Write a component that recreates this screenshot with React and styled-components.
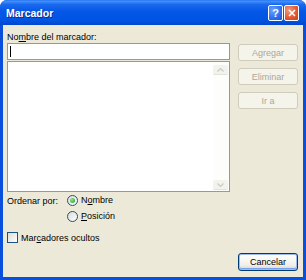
import React from 'react';
import styled, { createGlobalStyle } from 'styled-components';

const GlobalStyle = createGlobalStyle`
    html, body {
        margin: 0;
        padding: 0;
        background: #ffffff;
    }
    body {
        font-family: "Liberation Sans", Arial, sans-serif;
        font-size: 9px;
        color: #000;
    }
`

const Window = styled.div`
    width: 306px;
    height: 280px;
    display: flex;
    flex-direction: column;
    background: #0a4fdc;
    border-radius: 7px 7px 0 0;
    overflow: hidden;
`
const TitleBar = styled.div`
    height: 25px;
    flex: none;
    display: flex;
    align-items: center;
    padding: 0 7px 0 6px;
    background: linear-gradient(to bottom, #2a78f2 0%, #3d8ef8 6%, #1a68ee 18%, #0558e6 45%, #0054e3 80%, #0047cf 100%);
`
const Title = styled.span`
    flex: 1;
    color: #fff;
    font-weight: bold;
    font-size: 10.5px;
    text-shadow: 1px 1px 0 #0a2e8c;
    padding-top: 1px;
`
const TitleButton = styled.div`
    width: 13px;
    height: 14px;
    margin-left: 1px;
    border: 1px solid #fff;
    border-radius: 2px;
    display: flex;
    align-items: center;
    justify-content: center;
    background: ${({ $red }) => $red
        ? 'radial-gradient(circle at 30% 30%, #f29a7c, #e0562f 60%, #c8401c)'
        : 'radial-gradient(circle at 30% 30%, #6da3fb, #2d6ff0 60%, #1a52d8)'};
    color: #fff;
    font-weight: bold;
    font-size: 11px;
`
const Body = styled.div`
    flex: 1;
    margin: 0 3px 3px 3px;
    background: #ece9d8;
    padding: 6px 5px 0 4px;
    display: flex;
    flex-direction: column;
`
const Top = styled.div`
    display: grid;
    grid-template-columns: 223px 60px;
    column-gap: 8px;
`
const LeftCol = styled.div`
    display: flex;
    flex-direction: column;
`
const Label = styled.div`
    height: 12px;
    line-height: 12px;
`
const TextInput = styled.div`
    height: 17px;
    box-sizing: border-box;
    border: 1px solid #8e9aa6;
    background: #fff;
    display: flex;
    align-items: center;
    padding-left: 2px;
`
const Caret = styled.div`
    width: 1px;
    height: 11px;
    background: #000;
`
const ListBox = styled.div`
    margin-top: 1px;
    height: 131px;
    box-sizing: border-box;
    border: 1px solid #8e9aa6;
    background: #fff;
    display: flex;
    justify-content: flex-end;
`
const ScrollBar = styled.div`
    width: 15px;
    display: flex;
    flex-direction: column;
    justify-content: space-between;
    background: #fdfdfb;
    padding: 3px 1px 1px 0;
`
const ScrollArrow = styled.div`
    height: 9px;
    border-radius: 2px;
    background: #f3f3ee;
    border-bottom: 1px solid #e2e2dc;
    display: flex;
    align-items: center;
    justify-content: center;
`
const RightCol = styled.div`
    display: flex;
    flex-direction: column;
    gap: 7px;
    padding-top: 13px;
`
const Button = styled.div`
    height: ${({ $tall }) => ($tall ? '18px' : '17px')};
    box-sizing: border-box;
    border: 1px solid ${({ $disabled }) => ($disabled ? '#cfcbbd' : '#003c74')};
    border-radius: 3px;
    background: ${({ $disabled }) => ($disabled
        ? '#f5f4ea'
        : 'linear-gradient(to bottom, #ffffff 0%, #f0f0ea 70%, #d6d0c5 100%)')};
    box-shadow: ${({ $default }) => ($default ? 'inset 0 0 0 1px #9fbbee, inset 0 -1px 0 1px #7ca1e8' : 'none')};
    color: ${({ $disabled }) => ($disabled ? '#aca899' : '#000')};
    display: flex;
    align-items: center;
    justify-content: center;
`
const SortRow = styled.div`
    margin-top: 3px;
    display: grid;
    grid-template-columns: 60px auto;
    align-items: start;
`
const SortLabel = styled.div`
    line-height: 12px;
    padding-top: 0;
`
const RadioList = styled.div`
    display: flex;
    flex-direction: column;
    gap: 5px;
`
const Option = styled.div`
    display: flex;
    align-items: center;
    gap: 3px;
    height: 11px;
    line-height: 11px;
`
const Radio = styled.div`
    width: 9px;
    height: 9px;
    border-radius: 50%;
    border: 1px solid #1c5180;
    background: linear-gradient(135deg, #dcdcd5, #ffffff);
    display: flex;
    align-items: center;
    justify-content: center;
    &::after {
        content: '';
        width: 5px;
        height: 5px;
        border-radius: 50%;
        background: ${({ $checked }) => ($checked ? 'radial-gradient(circle at 35% 35%, #8ee28e, #21a121)' : 'transparent')};
    }
`
const CheckRow = styled.div`
    margin-top: 10px;
    display: flex;
    align-items: center;
    gap: 3px;
    height: 11px;
`
const CheckBox = styled.div`
    width: 9px;
    height: 9px;
    border: 1px solid #1c5180;
    background: linear-gradient(135deg, #dcdcd5, #ffffff);
`
const Footer = styled.div`
    margin-top: auto;
    margin-bottom: 6px;
    display: flex;
    justify-content: flex-end;
`
const FooterButton = styled(Button)`
    width: 60px;
`

const Chevron = ({ up }) => (
    <svg width="7" height="4" viewBox="0 0 7 4">
        <path d={up ? 'M0.5 3.5 L3.5 0.5 L6.5 3.5' : 'M0.5 0.5 L3.5 3.5 L6.5 0.5'} stroke="#c9cbc4" fill="none" strokeWidth="1.2" />
    </svg>
)

export default function App() {
    return (
        <>
            <GlobalStyle />
            <Window>
                <TitleBar>
                    <Title>Marcador</Title>
                    <TitleButton>?</TitleButton>
                    <TitleButton $red>
                        <svg width="8" height="8" viewBox="0 0 8 8">
                            <path d="M1 1 L7 7 M7 1 L1 7" stroke="#fff" strokeWidth="1.6" />
                        </svg>
                    </TitleButton>
                </TitleBar>
                <Body>
                    <Top>
                        <LeftCol>
                            <Label>No<u>m</u>bre del marcador:</Label>
                            <TextInput><Caret /></TextInput>
                            <ListBox>
                                <ScrollBar>
                                    <ScrollArrow><Chevron up /></ScrollArrow>
                                    <ScrollArrow><Chevron /></ScrollArrow>
                                </ScrollBar>
                            </ListBox>
                        </LeftCol>
                        <RightCol>
                            <Button $disabled>Agregar</Button>
                            <Button $disabled>Eliminar</Button>
                            <Button $disabled>Ir a</Button>
                        </RightCol>
                    </Top>
                    <SortRow>
                        <SortLabel>Ordenar por:</SortLabel>
                        <RadioList>
                            <Option><Radio $checked /><span>N<u>o</u>mbre</span></Option>
                            <Option><Radio /><span><u>P</u>osición</span></Option>
                        </RadioList>
                    </SortRow>
                    <CheckRow>
                        <CheckBox />
                        <span>Mar<u>c</u>adores ocultos</span>
                    </CheckRow>
                    <Footer>
                        <FooterButton $tall $default>Cancelar</FooterButton>
                    </Footer>
                </Body>
            </Window>
        </>
    )
}
